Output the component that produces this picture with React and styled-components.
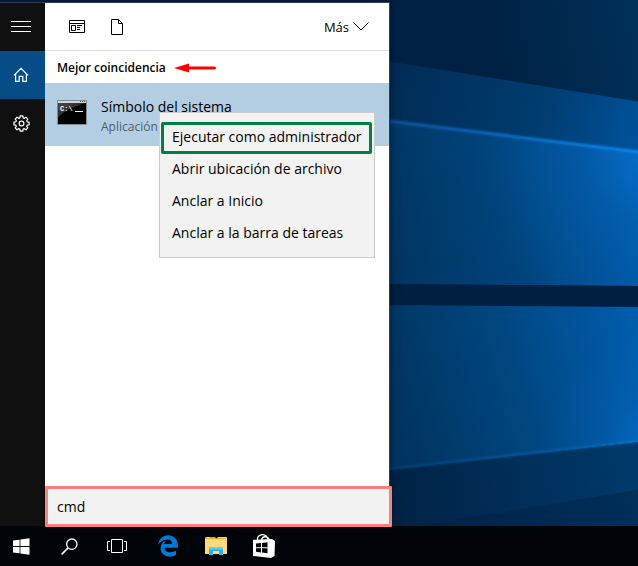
import React from "react";
import styled, { createGlobalStyle, css } from "styled-components";
import { FaEdgeLegacy } from "react-icons/fa6";

const GlobalStyle = createGlobalStyle`
  *, *::before, *::after { box-sizing: border-box; }
  body {
    margin: 0;
    background: #001d3f;
    font-family: "Open Sans", "Noto Sans", sans-serif;
    font-size: 14px;
    line-height: 20px;
    color: #000;
  }
  button, input { font: inherit; color: inherit; }
  svg { display: block; }
`;

const Desktop = styled.div`
  position: relative;
  display: flex;
  flex-direction: column;
  min-height: 100vh;
  overflow: hidden;
`;

const WallpaperArt = styled.svg`
  position: absolute;
  inset: 0;
  width: 100%;
  height: 100%;
`;

const Workspace = styled.main`
  position: relative;
  display: flex;
  flex: 1;
  padding-top: 2px;
`;

const StartPanel = styled.section`
  display: flex;
  width: 390px;
  max-width: 100%;
  border: solid #2d3f52;
  border-width: 1px 1px 0 0;
  box-shadow: 0 0 8px rgba(0, 0, 0, 0.5);
`;

const iconButton = css`
  display: flex;
  align-items: center;
  justify-content: center;
  padding: 0;
  border: 0;
  background: transparent;
`;

const Rail = styled.nav`
  display: flex;
  flex-direction: column;
  flex: none;
  width: 45px;
  background: #101010;
`;

const RailButton = styled.button`
  ${iconButton}
  height: 48px;
  padding-right: 3px;
  color: #fff;
  background: ${(p) => (p.$active ? "#064d88" : "transparent")};
`;

const Results = styled.div`
  display: flex;
  flex-direction: column;
  flex: 1;
  min-width: 0;
  background: #fff;
`;

const FilterBar = styled.header`
  display: flex;
  align-items: center;
  height: 48px;
  padding: 0 20px 0 12px;
  border-bottom: 1px solid #e2e2e2;
`;

const FilterButton = styled.button`
  ${iconButton}
  width: 40px;
  height: 40px;
`;

const MoreButton = styled.button`
  ${iconButton}
  gap: 4px;
  margin-left: auto;
  font-size: 13px;
`;

const GroupHeading = styled.h2`
  display: flex;
  align-items: center;
  gap: 8px;
  height: 32px;
  margin: 0;
  padding: 2px 12px 0;
  font-size: 12px;
  font-weight: 600;
`;

const BestMatch = styled.div`
  position: relative;
  background: #b3cde3;
`;

const ResultButton = styled.button`
  display: flex;
  gap: 14px;
  width: 100%;
  height: 63px;
  padding: 14px 12px 10px;
  border: 0;
  background: transparent;
  text-align: left;
`;

const ResultIcon = styled.span`
  padding-top: 3px;
`;

const ResultText = styled.span`
  display: flex;
  flex-direction: column;
`;

const ResultKind = styled.span`
  font-size: 12px;
  color: #4f5f6d;
`;

const ContextMenu = styled.ul`
  position: absolute;
  top: 29px;
  left: 114px;
  z-index: 2;
  width: 216px;
  margin: 0;
  padding: 9px 2px 7px 1px;
  list-style: none;
  background: #f2f2f2;
  border: 1px solid #ccc;
`;

const MenuButton = styled.button`
  display: block;
  width: 100%;
  height: 32px;
  padding: 0 8px 2px;
  text-align: left;
  white-space: nowrap;
  background: transparent;
  border: 3px solid ${(p) => (p.$marked ? "#008045" : "transparent")};
  border-radius: 2px;
`;

const SearchBox = styled.label`
  position: relative;
  z-index: 1;
  display: flex;
  height: 39px;
  margin-top: auto;

  &::after {
    content: "";
    position: absolute;
    inset: -1px -3px -1px 0;
    border: 3px solid #ff7f7f;
    border-radius: 1px;
    pointer-events: none;
  }
`;

const SearchInput = styled.input`
  width: 100%;
  padding: 0 12px;
  border: 0;
  outline: 0;
  background: #f2f2f2;
`;

const Taskbar = styled.footer`
  position: relative;
  z-index: 0;
  display: flex;
  gap: 3px;
  height: 40px;
  background: #010409;
`;

const TaskGroup = styled.div`
  display: flex;
`;

const StartButton = styled.button`
  ${iconButton}
  width: 45px;
  padding-right: 3px;
  color: #fff;
`;

const TaskButton = styled.button`
  ${iconButton}
  width: 48px;
  color: ${(p) => p.$tint || "#fff"};
`;

function Wallpaper() {
  return (
    <WallpaperArt viewBox="0 0 638 566" preserveAspectRatio="xMaxYMax slice" aria-hidden="true">
      <defs>
        <linearGradient id="sky" gradientUnits="userSpaceOnUse" x1="390" y1="60" x2="638" y2="20">
          <stop offset="0" stopColor="#002145" />
          <stop offset="0.4" stopColor="#002144" />
          <stop offset="1" stopColor="#003058" />
        </linearGradient>
        <linearGradient id="beam" gradientUnits="userSpaceOnUse" x1="390" y1="80" x2="638" y2="140">
          <stop offset="0" stopColor="#002c55" />
          <stop offset="0.6" stopColor="#003c70" />
          <stop offset="1" stopColor="#00529a" />
        </linearGradient>
        <linearGradient id="pane" gradientUnits="userSpaceOnUse" x1="390" y1="250" x2="638" y2="200">
          <stop offset="0" stopColor="#003562" />
          <stop offset="0.5" stopColor="#00447c" />
          <stop offset="1" stopColor="#005aa8" />
        </linearGradient>
        <radialGradient id="paneGlow" gradientUnits="userSpaceOnUse" cx="660" cy="150" r="190">
          <stop offset="0" stopColor="#0a7be0" stopOpacity="0.7" />
          <stop offset="0.4" stopColor="#0a70cc" stopOpacity="0.25" />
          <stop offset="1" stopColor="#0a70cc" stopOpacity="0" />
        </radialGradient>
        <linearGradient id="lowPane" gradientUnits="userSpaceOnUse" x1="390" y1="420" x2="638" y2="350">
          <stop offset="0" stopColor="#00335f" />
          <stop offset="0.5" stopColor="#00467f" />
          <stop offset="1" stopColor="#005cac" />
        </linearGradient>
        <radialGradient id="lowGlow" gradientUnits="userSpaceOnUse" cx="655" cy="440" r="110">
          <stop offset="0" stopColor="#0a74d8" stopOpacity="0.7" />
          <stop offset="0.4" stopColor="#0a74d8" stopOpacity="0.2" />
          <stop offset="1" stopColor="#0a74d8" stopOpacity="0" />
        </radialGradient>
        <linearGradient id="floor" gradientUnits="userSpaceOnUse" x1="390" y1="500" x2="638" y2="460">
          <stop offset="0" stopColor="#002244" />
          <stop offset="1" stopColor="#003a6c" />
        </linearGradient>
        <linearGradient id="edge" gradientUnits="userSpaceOnUse" x1="390" y1="0" x2="638" y2="0">
          <stop offset="0" stopColor="#0c5199" />
          <stop offset="1" stopColor="#0c86ee" />
        </linearGradient>
        <linearGradient id="lowEdge" gradientUnits="userSpaceOnUse" x1="390" y1="0" x2="638" y2="0">
          <stop offset="0" stopColor="#004278" />
          <stop offset="1" stopColor="#0a70cc" />
        </linearGradient>
        <filter id="soft" x="-10%" y="-50%" width="120%" height="200%">
          <feGaussianBlur stdDeviation="1" />
        </filter>
      </defs>
      <rect width="638" height="566" fill="url(#sky)" />
      <path d="M380 60 L648 103 V160 L380 120Z" fill="url(#beam)" />
      <path d="M380 120 L648 153 V286 L380 284Z" fill="url(#pane)" />
      <path d="M380 120 L648 153 V286 L380 284Z" fill="url(#paneGlow)" />
      <path d="M380 120 L648 153" stroke="url(#edge)" strokeWidth="3" filter="url(#soft)" />
      <path d="M380 284 L648 286 V307 L380 305Z" fill="#001f41" />
      <path d="M380 305 L648 307 V441 L380 471Z" fill="url(#lowPane)" />
      <path d="M380 305 L648 307 V441 L380 471Z" fill="url(#lowGlow)" />
      <path d="M380 471 L648 441 V566 H380Z" fill="url(#floor)" />
      <path d="M420 526 L648 488 V566 H420Z" fill="#001c3c" opacity="0.35" />
      <path d="M380 470 L648 440" stroke="url(#lowEdge)" strokeWidth="2" filter="url(#soft)" />
    </WallpaperArt>
  );
}

const stroke = { fill: "none", stroke: "currentColor" };

const MenuLines = () => (
  <svg width="20" height="12" viewBox="0 0 20 12" {...stroke} aria-hidden="true">
    <path d="M0 .5H20M0 5.5H20M0 10.5H20" />
  </svg>
);

const HomeIcon = () => (
  <svg width="16" height="16" viewBox="0 0 16 16" {...stroke} strokeWidth="1.2" aria-hidden="true">
    <path d="M1 8.4 8 1.3 15 8.4M2.6 7.2V14.4H6.2V9.4H9.8V14.4H13.4V7.2" />
  </svg>
);

const GearIcon = () => {
  const teeth = [];
  for (let i = 0; i < 8; i += 1) {
    const at = (deg, r) => {
      const a = ((i * 45 + deg - 90) * Math.PI) / 180;
      return `${(8.5 + r * Math.cos(a)).toFixed(2)} ${(8.5 + r * Math.sin(a)).toFixed(2)}`;
    };
    teeth.push(at(-16, 5.9), at(-10, 7.7), at(10, 7.7), at(16, 5.9));
  }
  return (
    <svg width="17" height="17" viewBox="0 0 17 17" {...stroke} strokeWidth="1.2" aria-hidden="true">
      <path d={`M${teeth.join("L")}Z`} strokeLinejoin="round" />
      <circle cx="8.5" cy="8.5" r="2.4" />
    </svg>
  );
};

const AppsIcon = () => (
  <svg width="16" height="13" viewBox="0 0 16 13" {...stroke} aria-hidden="true">
    <path d="M.5.5H15.5V12.5H.5ZM.5 3.5H15.5M2.5 5.5H6.5V10.5H2.5ZM8 5.5H13M8 7.5H11M8 9.5H11" />
  </svg>
);

const DocumentIcon = () => (
  <svg width="12" height="16" viewBox="0 0 12 16" {...stroke} aria-hidden="true">
    <path d="M.5.5H7.5L11.5 4.5V15.5H.5ZM7.5.5V4.5H11.5" />
  </svg>
);

const ChevronIcon = () => (
  <svg width="16" height="9" viewBox="0 0 16 9" {...stroke} aria-hidden="true">
    <path d="M.5.5 8 8 15.5.5" />
  </svg>
);

const RedArrow = () => (
  <svg width="42" height="10" viewBox="0 0 42 10" fill="#fe0000" aria-hidden="true">
    <path d="M0 5 15 .5V3.5H40.5Q42 3.5 42 5T40.5 6.5H15V9.5Z" />
  </svg>
);

const ConsoleIcon = () => (
  <svg width="30" height="26" viewBox="0 0 30 26" aria-hidden="true">
    <defs>
      <linearGradient id="glass" x1="0" y1="0" x2="1" y2="1">
        <stop offset="0" stopColor="#4a4a4a" />
        <stop offset="1" stopColor="#111" />
      </linearGradient>
    </defs>
    <rect x="0" y="0" width="30" height="25" rx="1" fill="#858a8f" />
    <rect x="1" y="1" width="28" height="2" fill="#d0d4d8" />
    <path d="M23 1.5h1M25 1.5h1M27 1.5h1" stroke="#555" />
    <rect x="1" y="3" width="28" height="21" fill="#000" />
    <path d="M1 3H29C22 5 8 9 1 18Z" fill="url(#glass)" />
    <text x="3" y="11" fontFamily="Liberation Mono, monospace" fontSize="7" fontWeight="700" fill="#fff">
      C:\
    </text>
    <path d="M18 11.5H26" stroke="#fff" />
  </svg>
);

const WindowsIcon = () => (
  <svg width="17" height="17" viewBox="0 0 17 17" fill="currentColor" aria-hidden="true">
    <path d="M0 2.6 6.6 1.7V8H0ZM7.4 1.6 16.5.3V8H7.4ZM0 9H6.6V15.3L0 14.4ZM7.4 9H16.5V16.7L7.4 15.4Z" />
  </svg>
);

const SearchIcon = () => (
  <svg width="17" height="17" viewBox="0 0 17 17" {...stroke} strokeWidth="1.3" aria-hidden="true">
    <circle cx="10.8" cy="6.2" r="5.2" />
    <path d="M7.1 9.9.6 16.4" strokeWidth="1.6" />
  </svg>
);

const TaskViewIcon = () => (
  <svg width="20" height="14" viewBox="0 0 20 14" {...stroke} aria-hidden="true">
    <path d="M4.5.5H15.5V13.5H4.5ZM3 2.5H.5V11.5H3M17 2.5H19.5V11.5H17" />
  </svg>
);

const FolderIcon = () => (
  <svg width="22" height="20" viewBox="0 0 22 20" aria-hidden="true">
    <path d="M0 2Q0 1 1 1H10L12 3H0Z" fill="#e8a915" />
    <path d="M0 3H11L13 1H21Q22 1 22 2V18H0Z" fill="#fbdc7c" />
    <path d="M2 1.7H4.5" stroke="#fff3c4" />
    <path d="M12 2.5H21" stroke="#e8a915" />
    <path d="M4 11.5H18V19H14V15H8V19H4Z" fill="#27b3ea" />
    <path d="M4 11.5H18V13.5H4Z" fill="#5accf3" />
  </svg>
);

const StoreIcon = () => (
  <svg width="22" height="24" viewBox="0 0 22 24" aria-hidden="true">
    <path d="M4.5 6V4Q6 .7 9.5 .7T14.5 4V6M8.5 6Q9 2.5 12.5 2.8T16 6" fill="none" stroke="#fff" strokeWidth="1.3" />
    <path d="M0 5.8 19 5 22 7 21.5 22 18 24 0 22Z" fill="#fff" />
    <path d="M3 9.6 8 9V13.3H3ZM9 8.9 14.5 8.2V13.3H9ZM3 14.3H8V18.4L3 17.8ZM9 14.3H14.5V19.2L9 18.5Z" fill="#010409" />
  </svg>
);

const MENU = [
  { label: "Ejecutar como administrador", marked: true },
  { label: "Abrir ubicación de archivo" },
  { label: "Anclar a Inicio" },
  { label: "Anclar a la barra de tareas" },
];

export default function App() {
  return (
    <>
      <GlobalStyle />
      <Desktop>
        <Wallpaper />
        <Workspace>
          <StartPanel>
            <Rail>
              <RailButton aria-label="Menú"><MenuLines /></RailButton>
              <RailButton $active aria-label="Inicio"><HomeIcon /></RailButton>
              <RailButton aria-label="Configuración"><GearIcon /></RailButton>
            </Rail>
            <Results>
              <FilterBar>
                <FilterButton aria-label="Aplicaciones"><AppsIcon /></FilterButton>
                <FilterButton aria-label="Documentos"><DocumentIcon /></FilterButton>
                <MoreButton>Más <ChevronIcon /></MoreButton>
              </FilterBar>
              <GroupHeading>Mejor coincidencia <RedArrow /></GroupHeading>
              <BestMatch>
                <ResultButton>
                  <ResultIcon><ConsoleIcon /></ResultIcon>
                  <ResultText>
                    <span>Símbolo del sistema</span>
                    <ResultKind>Aplicación</ResultKind>
                  </ResultText>
                </ResultButton>
                <ContextMenu>
                  {MENU.map((item) => (
                    <li key={item.label}>
                      <MenuButton $marked={item.marked}>{item.label}</MenuButton>
                    </li>
                  ))}
                </ContextMenu>
              </BestMatch>
              <SearchBox>
                <SearchInput type="text" defaultValue="cmd" aria-label="Buscar" />
              </SearchBox>
            </Results>
          </StartPanel>
        </Workspace>
        <Taskbar>
          <TaskGroup>
            <StartButton aria-label="Inicio"><WindowsIcon /></StartButton>
            <TaskButton aria-label="Buscar"><SearchIcon /></TaskButton>
            <TaskButton aria-label="Vista de tareas"><TaskViewIcon /></TaskButton>
          </TaskGroup>
          <TaskGroup>
            <TaskButton $tint="#0078d7" aria-label="Microsoft Edge"><FaEdgeLegacy size={22} /></TaskButton>
            <TaskButton aria-label="Explorador de archivos"><FolderIcon /></TaskButton>
            <TaskButton aria-label="Tienda"><StoreIcon /></TaskButton>
          </TaskGroup>
        </Taskbar>
      </Desktop>
    </>
  );
}
